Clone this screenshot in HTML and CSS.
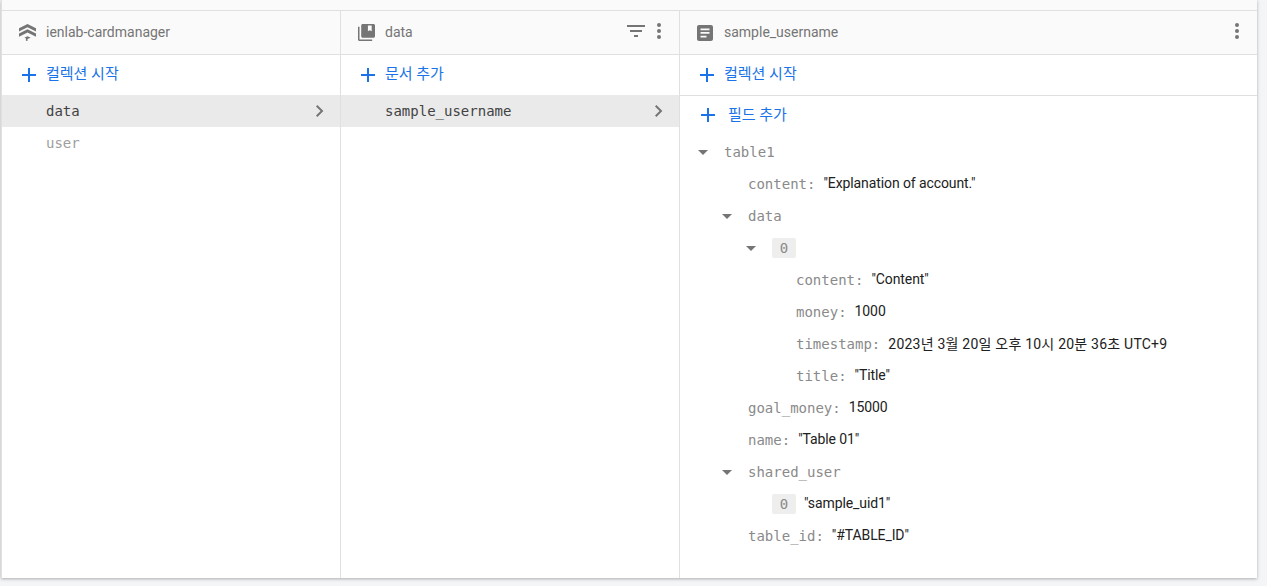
FILE: index.html
```html
<!DOCTYPE html>
<html lang="ko">

<head>
    <meta charset="UTF-8">
    <meta name="viewport" content="width=device-width, initial-scale=1.0">
    <title>Firestore data</title>

    <link rel="stylesheet" href="styles.css">
</head>

<body>
    <section class="panel">
        <div class="top-strip"></div>

        <div class="cols">
            <div class="col">
                <div class="col-head">
                    <svg class="head-icon" viewBox="0 0 16 16">
                        <path d="M8 0 0 4v3l8-4 8 4V4z" />
                        <path d="M8 5 0 9v3l8-4 8 4V9z" />
                        <path d="M5 13l3-1.500 3 1.500-3 1v2l-1.500-.3V13.500z" />
                    </svg>
                    <span class="head-title">ienlab-cardmanager</span>
                </div>
                <div class="add-row">
                    <svg class="plus" viewBox="0 0 14 14"><path d="M6 0h2v6h6v2H8v6H6V8H0V6h6z" /></svg>
                    <span class="add-text">컬렉션 시작</span>
                </div>
                <div class="item selected">
                    <span>data</span>
                    <svg class="chev" viewBox="0 0 8 12"><path d="M1.4 0 0 1.4 4.6 6 0 10.6 1.4 12l6-6z" /></svg>
                </div>
                <div class="item">
                    <span>user</span>
                </div>
            </div>

            <div class="col">
                <div class="col-head">
                    <svg class="head-icon" viewBox="0 0 18 18">
                        <path d="M0 3h1.600v13.400H15V18H1.600C.7 18 0 17.300 0 16.400z" />
                        <path fill-rule="evenodd" d="M5 0h11.400C17.300 0 18 .7 18 1.600V13c0 .9-.7 1.600-1.600 1.600H5c-.9 0-1.600-.7-1.600-1.600V1.600C3.400.7 4.100 0 5 0zm5.500 1.600v6.200l2-1.300 2 1.300V1.600z" />
                    </svg>
                    <span class="head-title">data</span>
                    <div class="head-tools">
                        <svg class="filter" viewBox="0 0 18 12"><path d="M0 0h18v2H0zM3 5h12v2H3zM7 10h4v2H7z" /></svg>
                        <svg class="dots" viewBox="0 0 4 16"><circle cx="2" cy="2" r="2" /><circle cx="2" cy="8" r="2" /><circle cx="2" cy="14" r="2" /></svg>
                    </div>
                </div>
                <div class="add-row">
                    <svg class="plus" viewBox="0 0 14 14"><path d="M6 0h2v6h6v2H8v6H6V8H0V6h6z" /></svg>
                    <span class="add-text">문서 추가</span>
                </div>
                <div class="item selected">
                    <span>sample_username</span>
                    <svg class="chev" viewBox="0 0 8 12"><path d="M1.4 0 0 1.4 4.6 6 0 10.6 1.4 12l6-6z" /></svg>
                </div>
            </div>

            <div class="col col-doc">
                <div class="col-head">
                    <svg class="head-icon doc-icon" viewBox="0 0 16 16">
                        <path fill-rule="evenodd" d="M2 0h12c1.100 0 2 .9 2 2v12c0 1.100-.9 2-2 2H2c-1.100 0-2-.9-2-2V2C0 .9.9 0 2 0zm1.500 3.500v1.700h9V3.500zm0 3.600v1.700h9V7.100zm0 3.600v1.700h6v-1.700z" />
                    </svg>
                    <span class="head-title">sample_username</span>
                    <div class="head-tools">
                        <svg class="dots" viewBox="0 0 4 16"><circle cx="2" cy="2" r="2" /><circle cx="2" cy="8" r="2" /><circle cx="2" cy="14" r="2" /></svg>
                    </div>
                </div>
                <div class="add-row add-row-line">
                    <svg class="plus" viewBox="0 0 14 14"><path d="M6 0h2v6h6v2H8v6H6V8H0V6h6z" /></svg>
                    <span class="add-text">컬렉션 시작</span>
                </div>
                <div class="add-field">
                    <svg class="plus" viewBox="0 0 14 14"><path d="M6 0h2v6h6v2H8v6H6V8H0V6h6z" /></svg>
                    <span class="add-text field-text">필드 추가</span>
                </div>

                <div class="tree">
                    <div class="row"><i class="caret"></i><span class="key plain">table1</span></div>
                    <div class="sub">
                        <div class="row"><span class="key">content:</span><span class="val">"Explanation of account."</span></div>
                        <div class="row"><i class="caret"></i><span class="key plain">data</span></div>
                        <div class="sub">
                            <div class="row"><i class="caret"></i><span class="chip">0</span></div>
                            <div class="sub">
                                <div class="row"><span class="key">content:</span><span class="val">"Content"</span></div>
                                <div class="row"><span class="key">money:</span><span class="val">1000</span></div>
                                <div class="row"><span class="key">timestamp:</span><span class="val val-date">2023년 3월 20일 오후 10시 20분 36초 UTC+9</span></div>
                                <div class="row"><span class="key">title:</span><span class="val">"Title"</span></div>
                            </div>
                        </div>
                        <div class="row"><span class="key">goal_money:</span><span class="val">15000</span></div>
                        <div class="row"><span class="key">name:</span><span class="val">"Table 01"</span></div>
                        <div class="row"><i class="caret"></i><span class="key plain">shared_user</span></div>
                        <div class="sub">
                            <div class="row"><span class="chip">0</span><span class="val">"sample_uid1"</span></div>
                        </div>
                        <div class="row"><span class="key">table_id:</span><span class="val">"#TABLE_ID"</span></div>
                    </div>
                </div>
            </div>
        </div>
    </section>
</body>

</html>
```

FILE: styles.css
```css
* {
    padding: 0;
    margin: 0;
    box-sizing: border-box;
}

body {
    background: #f4f5f7;
    font-family: Roboto, "Noto Sans CJK KR", sans-serif;
    font-size: 14px;
    height: 586px;
    overflow: hidden;
}

.panel {
    display: flex;
    flex-direction: column;
    width: 1256px;
    height: 578px;
    margin-left: 1px;
    background: white;
    border-left: 1px solid #e0e0e0;
    box-shadow: 0 1px 3px rgba(60, 64, 67, 0.4);
}

.top-strip {
    height: 11px;
    background: #fafafa;
    border-bottom: 1px solid #e0e0e0;
}

.cols {
    flex: 1;
    display: flex;
}

.col {
    width: 339px;
    border-right: 1px solid #e0e0e0;
}

.col-doc {
    flex: 1;
    border-right: none;
}

.col-head {
    height: 44px;
    display: flex;
    align-items: center;
    padding-left: 17px;
    padding-right: 17px;
    background: #fafafa;
    border-bottom: 1px solid #e0e0e0;
}

.head-icon {
    width: 17px;
    height: 17px;
    margin-right: 10px;
    fill: #757575;
}

.doc-icon {
    width: 16px;
    height: 16px;
    margin-right: 11px;
}

.head-title {
    color: #757575;
    margin-bottom: 2px;
}

.head-tools {
    margin-left: auto;
    margin-bottom: 3px;
    display: flex;
    align-items: center;
    gap: 11px;
}

.filter {
    width: 18px;
    height: 12px;
    fill: #757575;
}

.dots {
    width: 6px;
    height: 16px;
    fill: #757575;
}

.plus {
    width: 14px;
    height: 14px;
    fill: #1a73e8;
}

.add-row {
    height: 40px;
    display: flex;
    align-items: center;
    gap: 10px;
    padding-left: 20px;
    color: #1a73e8;
}

.add-row-line {
    height: 41px;
    border-bottom: 1px solid #e0e0e0;
}

.add-field {
    height: 38px;
    display: flex;
    align-items: center;
    gap: 13px;
    padding-left: 21px;
    color: #1a73e8;
}

.add-text {
    font-size: 15px;
    margin-bottom: 6px;
}

.field-text {
    margin-bottom: 3px;
}

.item {
    height: 32px;
    display: flex;
    align-items: center;
    justify-content: space-between;
    padding-left: 44px;
    padding-right: 16px;
    font-family: "DejaVu Sans Mono", monospace;
    color: #9e9e9e;
}

.selected {
    background: #eaeaea;
    color: #424242;
}

.chev {
    width: 8px;
    height: 12px;
    fill: #757575;
}

.tree {
    padding-left: 18px;
    padding-top: 2px;
}

.sub {
    padding-left: 24px;
}

.row {
    height: 32px;
    display: flex;
    align-items: center;
    padding-left: 26px;
    position: relative;
    font-family: "DejaVu Sans Mono", monospace;
}

.caret {
    position: absolute;
    left: 0;
    top: 14px;
    border-left: 5px solid transparent;
    border-right: 5px solid transparent;
    border-top: 5px solid #757575;
}

.key {
    color: #8a8a8a;
    margin-right: 8px;
}

.plain {
    margin-right: 0;
}

.val {
    font-family: Roboto, "Noto Sans CJK KR", sans-serif;
    color: #212121;
    letter-spacing: -0.1px;
    position: relative;
    top: -1px;
}

.val-date {
    letter-spacing: 0.22px;
}

.chip {
    width: 24px;
    height: 20px;
    line-height: 20px;
    text-align: center;
    background: #eeeeee;
    border-radius: 2px;
    color: #8a8a8a;
    margin-right: 8px;
}
```
